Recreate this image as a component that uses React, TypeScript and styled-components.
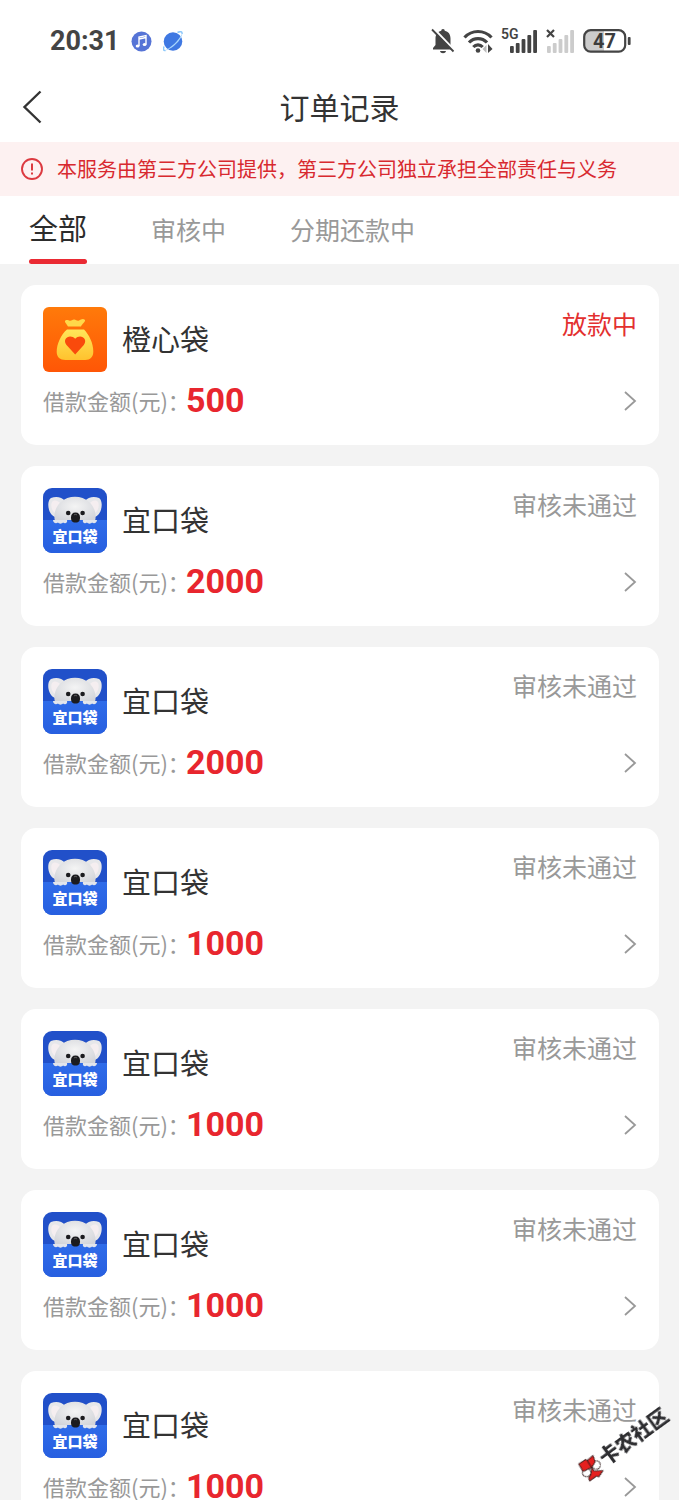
import React from "react";
import styled, { createGlobalStyle } from "styled-components";

const GlobalStyle = createGlobalStyle`
  * { box-sizing: border-box; }
  body {
    margin: 0;
    background: #f3f3f3;
    color: #333;
    font-family: "Noto Sans CJK SC", "Noto Sans", sans-serif;
  }
  button { font: inherit; border: 0; padding: 0; background: none; cursor: pointer; }
`;

const Screen = styled.div`
  display: flex;
  flex-direction: column;
  height: 100vh;
  overflow: hidden;
`;

const StatusBar = styled.div`
  display: flex;
  flex: none;
  align-items: center;
  height: 72px;
  padding: 10px 48px 0 50px;
  background: #fff;
`;

const Clock = styled.time`
  font: 700 27px/32px Roboto, sans-serif;
  color: #444;
  margin-right: 11px;
`;

const StatusGroup = styled.div<{ $gap: number; $end?: boolean }>`
  display: flex;
  align-items: center;
  gap: ${(p) => p.$gap}px;
  margin-left: ${(p) => (p.$end ? "auto" : "0")};
  svg { display: block; }
`;

const NavBar = styled.header`
  display: grid;
  flex: none;
  grid-template-columns: 64px 1fr 64px;
  align-items: center;
  height: 70px;
  background: #fff;
`;

const BackButton = styled.button`
  display: flex;
  align-items: center;
  height: 70px;
  padding-left: 22px;
`;

const Title = styled.h1`
  margin: 0;
  padding-bottom: 2px;
  text-align: center;
  font-size: 30px;
  font-weight: 400;
  line-height: 40px;
`;

const Notice = styled.div`
  display: flex;
  flex: none;
  align-items: center;
  gap: 13px;
  height: 54px;
  padding-left: 20px;
  background: #fdf1f1;
  color: #d8292f;
  font-size: 20px;
  line-height: 30px;
  white-space: nowrap;
`;

const Tabs = styled.nav`
  display: flex;
  flex: none;
  gap: 64px;
  height: 68px;
  padding-left: 29px;
  background: #fff;
`;

const Tab = styled.button<{ $active?: boolean }>`
  display: flex;
  height: 68px;
  position: relative;
  color: ${(p) => (p.$active ? "#2c2c2c" : "#999")};
  font-size: ${(p) => (p.$active ? 29 : 25)}px;
  line-height: ${(p) => (p.$active ? 62 : 66)}px;
  white-space: nowrap;
  &::after {
    content: "";
    position: absolute;
    left: 0;
    right: 0;
    bottom: 0;
    height: 5px;
    border-radius: 3px;
    background: ${(p) => (p.$active ? "#ea2a33" : "transparent")};
  }
`;

const OrderList = styled.main`
  display: flex;
  flex: 1;
  flex-direction: column;
  gap: 21px;
  min-height: 0;
  padding: 21px 20px 0 21px;
  overflow-y: auto;
  scrollbar-width: none;
`;

const Card = styled.article`
  flex: none;
  padding: 22px;
  border-radius: 15px;
  background: #fff;
`;

const CardHead = styled.div`
  display: flex;
  align-items: flex-start;
  height: 65px;
  svg { display: block; }
`;

const Lender = styled.h2`
  flex: 1;
  margin: 0 0 0 15px;
  font-size: 29px;
  font-weight: 400;
  line-height: 62px;
`;

const Status = styled.span<{ $tone: "red" | "grey" }>`
  color: ${(p) => (p.$tone === "red" ? "#e3302f" : "#999")};
  font-size: 25px;
  line-height: 32px;
`;

const CardRow = styled.div`
  display: flex;
  align-items: flex-start;
  height: 44px;
  margin-top: 7px;
`;

const Label = styled.span`
  width: 143px;
  color: #999;
  font-size: 22px;
  line-height: 42px;
  white-space: nowrap;
`;

const Amount = styled.strong`
  flex: 1;
  color: #e8262e;
  font: 700 34px/42px Roboto, sans-serif;
`;

const DetailButton = styled.button`
  display: flex;
  align-items: center;
  height: 44px;
`;

const Watermark = styled.div`
  position: fixed;
  right: 3px;
  bottom: 43px;
  display: flex;
  align-items: center;
  height: 26px;
  color: #2d2d30;
  font-size: 20px;
  font-weight: 900;
  line-height: 26px;
  transform: rotate(-36deg);
  pointer-events: none;
`;

const MusicIcon = () => (
  <svg width="21" height="21" viewBox="0 0 21 21">
    <circle cx="10.500" cy="10.500" r="10" fill="#5674d6" />
    <path d="M8 15V6l7-1.500v9M8 8l7-1.500" fill="none" stroke="#fff" strokeWidth="1.400" />
    <ellipse cx="6.600" cy="15" rx="1.900" ry="1.500" fill="#fff" />
    <ellipse cx="13.600" cy="13.600" rx="1.900" ry="1.500" fill="#fff" />
  </svg>
);

const PlanetIcon = () => (
  <svg width="21" height="21" viewBox="0 0 21 21">
    <circle cx="10" cy="10.500" r="9.300" fill="#3f78e2" />
    <path d="M1.500 19.500C7 17.500 16 9.500 19 2.500c.8 4-6.500 12.500-13 15.500-1.800 1-3.500 1.800-4.500 1.500z" fill="#a9d6fc" />
    <path d="M1 15.500c-1 3-.5 4.500 1.500 4M14.500 1.500c3-1.500 5-1 4.500 1.500" fill="none" stroke="#8cc8fa" strokeWidth="1.500" />
  </svg>
);

const BellOffIcon = () => (
  <svg width="24" height="28" viewBox="0 0 24 28">
    <path d="M12 2c1.200 0 1.700.8 1.700 1.800 3.800.8 5.800 3.600 5.800 7.700v6.500l2.500 3v1.500H2V21l2.500-3v-6.500c0-4.100 2-6.900 5.800-7.700C10.300 2.800 10.800 2 12 2z" fill="#444" />
    <path d="M9 24h6c-.5 3-5.500 3-6 0z" fill="#444" />
    <path d="M2.500 1.500l21 22" stroke="#fff" strokeWidth="2.500" />
    <path d="M1 2.500l21.500 22" stroke="#444" strokeWidth="1.800" />
  </svg>
);

const WifiIcon = () => (
  <svg width="30" height="26" viewBox="0 0 30 26">
    <g fill="none" stroke="#444" strokeWidth="3.200">
      <path d="M1.500 9.500c7.500-8 19.500-8 27 0" />
      <path d="M6 14.500c5-5.300 13-5.300 18 0" />
      <path d="M10.300 19c2.700-2.800 6.700-2.800 9.400 0" />
    </g>
    <circle cx="15" cy="22.500" r="2.300" fill="#444" />
    <path d="M23.500 17v8l-4-4z" fill="#bbb" />
    <path d="M25 16v9l4.500-4z" fill="#444" />
  </svg>
);

const SignalIcon = ({ tag, color }: { tag: "5G" | "x"; color: string }) => {
  const shift = tag === "5G" ? 9 : 1;
  return (
    <svg width={shift + 28} height="26" viewBox={`0 0 ${shift + 28} 26`}>
      {[7, 10, 14, 18, 23].map((h, i) => (
        <rect key={h} x={shift + i * 5.8} y={25 - h} width="3.800" height={h} rx="1" fill={color} />
      ))}
      {tag === "5G" ? (
        <text x="0" y="11" fontFamily="Roboto, sans-serif" fontWeight="600" fontSize="14" fill="#444">5G</text>
      ) : (
        <path d="M1 2l7 7M8 2l-7 7" stroke="#444" strokeWidth="2.200" />
      )}
    </svg>
  );
};

const BatteryIcon = () => (
  <svg width="48" height="24" viewBox="0 0 48 24">
    <path d="M8 1.500h13v21H8c-4 0-6.500-2-6.500-6V7.500c0-4 2.500-6 6.500-6z" fill="#ccc" />
    <rect x="1.200" y="1.200" width="41" height="21.500" rx="6.500" fill="none" stroke="#444" strokeWidth="2.200" />
    <rect x="44.800" y="8" width="2.800" height="8" rx="1" fill="#444" />
    <text x="21.500" y="19" textAnchor="middle" fontFamily="Roboto, sans-serif" fontWeight="700" fontSize="20" fill="#3c3c3c">47</text>
  </svg>
);

const OrangeBagIcon = () => (
  <svg width="64" height="65" viewBox="0 0 64 65">
    <defs>
      <linearGradient id="orange" x1="0" y1="0" x2="0" y2="1">
        <stop offset="0" stopColor="#ff7a0a" />
        <stop offset="1" stopColor="#ff5606" />
      </linearGradient>
      <linearGradient id="gold" x1="0" y1="0" x2="0" y2="1">
        <stop offset="0" stopColor="#ffe65a" />
        <stop offset="1" stopColor="#ffc22e" />
      </linearGradient>
    </defs>
    <rect width="64" height="65" rx="6" fill="url(#orange)" />
    <path d="M25 19.500l-3-4.500c-.5-2 2-2.500 4-1.500 2 1 3-.8 5-1 2-.2 3 2 5 1 2-1.500 4.500-2.500 6-.5.500 2-3 4-4 6.500z" fill="#ffd84a" />
    <path d="M24 22.500h17c5 5 9.500 14 9.300 22 0 5.500-3 8.500-8 8.500H22.500c-5.500 0-8.800-3-8.800-8 0-8 4.300-17.500 10.300-22.500z" fill="url(#gold)" />
    <path d="M32.200 47.500L23.500 38c-5-7 4-11.500 8.700-6.200 4.500-5.300 13.500-.8 8.600 6.200z" fill="#f94a0c" />
  </svg>
);

const KoalaIcon = () => (
  <svg width="64" height="65" viewBox="0 0 64 65">
    <defs>
      <radialGradient id="fur" cx=".5" cy=".4" r=".65">
        <stop offset="0" stopColor="#f4f4f4" />
        <stop offset="1" stopColor="#d3d5da" />
      </radialGradient>
      <linearGradient id="band" x1="0" y1="0" x2="0" y2="1">
        <stop offset="0" stopColor="#2f6ce9" />
        <stop offset="1" stopColor="#275fe0" />
      </linearGradient>
      <clipPath id="tile"><rect width="64" height="65" rx="9" /></clipPath>
    </defs>
    <g clipPath="url(#tile)">
      <rect width="64" height="65" fill="#2150c9" />
      <path d="M13 29C5 28 3 13 8 10c5-2 11-1 14 3zM51 29c8-1 10-16 5-19-5-2-11-1-14 3z" fill="#e6e7ea" />
      <path d="M12 25c-4-3-5-10-2-12 3-1 5 0 7 2zM52 25c4-3 5-10 2-12-3-1-5 0-7 2z" fill="#f5eef0" />
      <path d="M12 33c-2-7 1-15 6-19 7-7 21-7 28 0 5 4 8 12 6 19z" fill="url(#fur)" />
      <rect y="32" width="64" height="33" fill="url(#band)" />
      <path d="M10 32h14c1 3-2 4-4 2.500-1 1.500-4 1.500-5 0-2 1.500-5 .5-5-2.500zM40 32h14c0 3-3 4-5 2.500-1 1.500-4 1.500-5 0-2 1.500-5 .5-4-2.500z" fill="#e2e5ec" />
      <circle cx="25.200" cy="25" r="2.300" fill="#1c1c1f" />
      <circle cx="39.600" cy="25" r="2.300" fill="#1c1c1f" />
      <path d="M32.500 24.500c3.200 0 4.500 2 4.500 5s-1 5-4.500 5-4.500-2-4.500-5 1.300-5 4.500-5z" fill="#1b1b1e" />
      <path d="M31 27c1-.8 2-.8 3 0" fill="none" stroke="#666" strokeWidth="1" />
      <text x="32" y="54" textAnchor="middle" fontSize="15" fontWeight="900" fill="#fff">宜口袋</text>
    </g>
  </svg>
);

const WatermarkLogo = () => (
  <svg width="26" height="26" viewBox="0 0 26 26" overflow="visible">
    <g transform="rotate(36 13 13)" stroke="#2a1515" strokeWidth=".8" strokeLinejoin="round">
      <circle cx="18.500" cy="10.500" r="4.300" fill="#fff" />
      <circle cx="9" cy="18" r="4.300" fill="#fff" />
      <path d="M1 9.500L8 5l1.500 1L15.500 1l2 6.500-3.500 5.500-8.500 4z" fill="#e5201f" />
      <path d="M14 13l2.500 3.500 9-.5-4.500 6.500-2-1L12 26.500l-1-3 2.500-4z" fill="#e5201f" />
      <path d="M9.500 6l4.500 7" fill="none" />
    </g>
  </svg>
);

type Order = { lender: "橙心袋" | "宜口袋"; status: string; amount: number };

const orders: Order[] = [
  { lender: "橙心袋", status: "放款中", amount: 500 },
  { lender: "宜口袋", status: "审核未通过", amount: 2000 },
  { lender: "宜口袋", status: "审核未通过", amount: 2000 },
  { lender: "宜口袋", status: "审核未通过", amount: 1000 },
  { lender: "宜口袋", status: "审核未通过", amount: 1000 },
  { lender: "宜口袋", status: "审核未通过", amount: 1000 },
  { lender: "宜口袋", status: "审核未通过", amount: 1000 },
];

const OrderCard = ({ lender, status, amount }: Order) => (
  <Card>
    <CardHead>
      {lender === "橙心袋" ? <OrangeBagIcon /> : <KoalaIcon />}
      <Lender>{lender}</Lender>
      <Status $tone={status === "放款中" ? "red" : "grey"}>{status}</Status>
    </CardHead>
    <CardRow>
      <Label>借款金额(元)：</Label>
      <Amount>{amount}</Amount>
      <DetailButton aria-label="查看详情">
        <svg width="14" height="20" viewBox="0 0 14 20">
          <path d="M2 1l10 9-10 9" fill="none" stroke="#999" strokeWidth="1.800" />
        </svg>
      </DetailButton>
    </CardRow>
  </Card>
);

export default function App() {
  return (
    <Screen>
      <GlobalStyle />
      <StatusBar>
        <Clock>20:31</Clock>
        <StatusGroup $gap={11}>
          <MusicIcon />
          <PlanetIcon />
        </StatusGroup>
        <StatusGroup $gap={8} $end>
          <StatusGroup $gap={8}>
            <BellOffIcon />
            <WifiIcon />
          </StatusGroup>
          <SignalIcon tag="5G" color="#444" />
          <SignalIcon tag="x" color="#ccc" />
          <BatteryIcon />
        </StatusGroup>
      </StatusBar>
      <NavBar>
        <BackButton aria-label="返回">
          <svg width="20" height="34" viewBox="0 0 20 34">
            <path d="M18.500 1.500L2.500 17l16 15.500" fill="none" stroke="#333" strokeWidth="2.400" />
          </svg>
        </BackButton>
        <Title>订单记录</Title>
      </NavBar>
      <Notice>
        <svg width="24" height="24" viewBox="0 0 24 24">
          <circle cx="12" cy="12" r="10" fill="none" stroke="#dc3a40" strokeWidth="1.900" />
          <path d="M12 6.500v7M12 15.500v2" stroke="#dc3a40" strokeWidth="2" />
        </svg>
        <span>本服务由第三方公司提供，第三方公司独立承担全部责任与义务</span>
      </Notice>
      <Tabs>
        <Tab $active>全部</Tab>
        <Tab>审核中</Tab>
        <Tab>分期还款中</Tab>
      </Tabs>
      <OrderList>
        {orders.map((order, i) => (
          <OrderCard key={i} {...order} />
        ))}
      </OrderList>
      <Watermark>
        <WatermarkLogo />
        <span>卡农社区</span>
      </Watermark>
    </Screen>
  );
}
